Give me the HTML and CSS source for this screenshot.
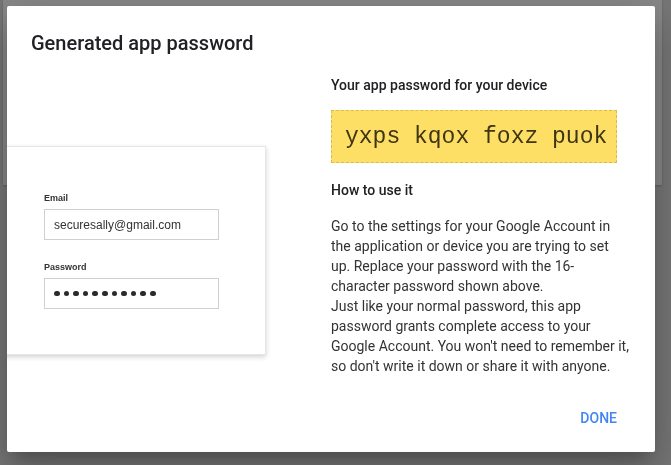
FILE: index.html
```html
<!DOCTYPE html>
<html lang="en">
<head>
    <meta charset="UTF-8">
    <meta name="viewport" content="width=device-width, initial-scale=1.0">
    <title>Generated app password</title>
    <link rel="stylesheet" href="styles.css">
</head>
<body>
    <div class="page">
        <div class="page-card"></div>
    </div>

    <div class="overlay">
        <div class="dialog">
            <h2 class="dialog-title">Generated app password</h2>

            <div class="dialog-body">
                <div class="illustration">
                    <div class="login-card">
                        <label>Email</label>
                        <div class="fake-input">securesally@gmail.com</div>
                        <label class="second">Password</label>
                        <div class="fake-input dots">
                            <span></span><span></span><span></span><span></span>
                            <span></span><span></span><span></span><span></span>
                            <span></span><span></span><span></span>
                        </div>
                    </div>
                </div><!--illustration-->

                <div class="info">
                    <h3>Your app password for your device</h3>
                    <div class="app-password">yxps kqox foxz puok</div>
                    <h3 class="how">How to use it</h3>
                    <p>
                        Go to the settings for your Google Account in the application or device you are trying to set up. Replace your password with the 16-character password shown above.<br>
                        Just like your normal password, this app password grants complete access to your Google Account. You won't need to remember it, so don't write it down or share it with anyone.
                    </p>
                </div>
            </div>

            <div class="dialog-actions">
                <button type="button" class="btn-done">Done</button>
            </div>
        </div>
    </div>
</body>
</html>
```

FILE: styles.css
```css
html, body {
    margin: 0;
    padding: 0;
    height: 100%;
    overflow: hidden;
    font-family: Roboto, 'Liberation Sans', Arial, sans-serif;
}

body {
    background: #777;
}

/* page under the scrim */
.page {
    padding: 0 9px 0 3px;
}

.page-card {
    height: 185px;
    background: #888;
    box-shadow: 0 1px 2px rgba(0, 0, 0, 0.2);
}

.overlay {
    position: fixed;
    inset: 0;
    padding: 6px 0 0 7px;
}

.dialog {
    display: flex;
    flex-direction: column;
    width: 648px;
    height: 446px;
    box-sizing: border-box;
    padding: 24px 24px 16px;
    background: #fff;
    border-radius: 2px;
    overflow: hidden;
    box-shadow: 0 11px 15px -7px rgba(0, 0, 0, 0.2), 0 24px 38px 3px rgba(0, 0, 0, 0.14), 0 9px 46px 8px rgba(0, 0, 0, 0.12);
}

.dialog-title {
    margin: 0;
    font-size: 20px;
    line-height: 26px;
    font-weight: 500;
    color: #202124;
}

.dialog-body {
    display: flex;
}

.illustration {
    width: 300px;
    flex-shrink: 0;
    padding-top: 90px;
}

.login-card {
    width: 221px;
    margin-left: -44px;
    padding: 45px 0 45px 56px;
    background: #fff;
    border: 1px solid #e6e6e6;
    box-shadow: 0 2px 5px rgba(0, 0, 0, 0.18);
    font-family: 'Liberation Sans', Arial, sans-serif;
}

.login-card label {
    display: block;
    font-size: 9px;
    line-height: 12px;
    font-weight: bold;
    color: #333;
    margin-bottom: 5px;
}

.login-card label.second {
    margin-top: 21px;
}

.fake-input {
    width: 175px;
    height: 31px;
    box-sizing: border-box;
    border: 1px solid #d0d0d0;
    padding: 0 9px;
    display: flex;
    align-items: center;
    font-size: 12px;
    color: #333;
}

.dots {
    gap: 4px;
}

.dots span {
    width: 5.6px;
    height: 5.6px;
    border-radius: 50%;
    background: #2b2b2b;
}

.info {
    width: 300px;
    padding-top: 19px;
}

.info h3 {
    margin: 0;
    font-size: 14px;
    line-height: 20px;
    font-weight: 500;
    color: #202124;
}

.app-password {
    width: 286px;
    height: 53px;
    box-sizing: border-box;
    margin: 15px 0 17px;
    padding-left: 13px;
    display: flex;
    align-items: center;
    background: #fddf66;
    border: 1px dashed #d9bd4c;
    font-family: 'Courier New', 'Nimbus Mono PS', FreeMono, 'Liberation Mono', monospace;
    font-size: 23px;
    color: #3f3515;
}

.info p {
    margin: 16px 0 0;
    font-size: 14px;
    line-height: 20px;
    color: #333;
}

.dialog-actions {
    margin-top: auto;
    display: flex;
    justify-content: flex-end;
}

.btn-done {
    margin-right: 6px;
    height: 36px;
    padding: 0 8px;
    border: none;
    background: none;
    font-family: inherit;
    font-size: 14px;
    font-weight: 500;
    text-transform: uppercase;
    color: #4285f4;
}
```
